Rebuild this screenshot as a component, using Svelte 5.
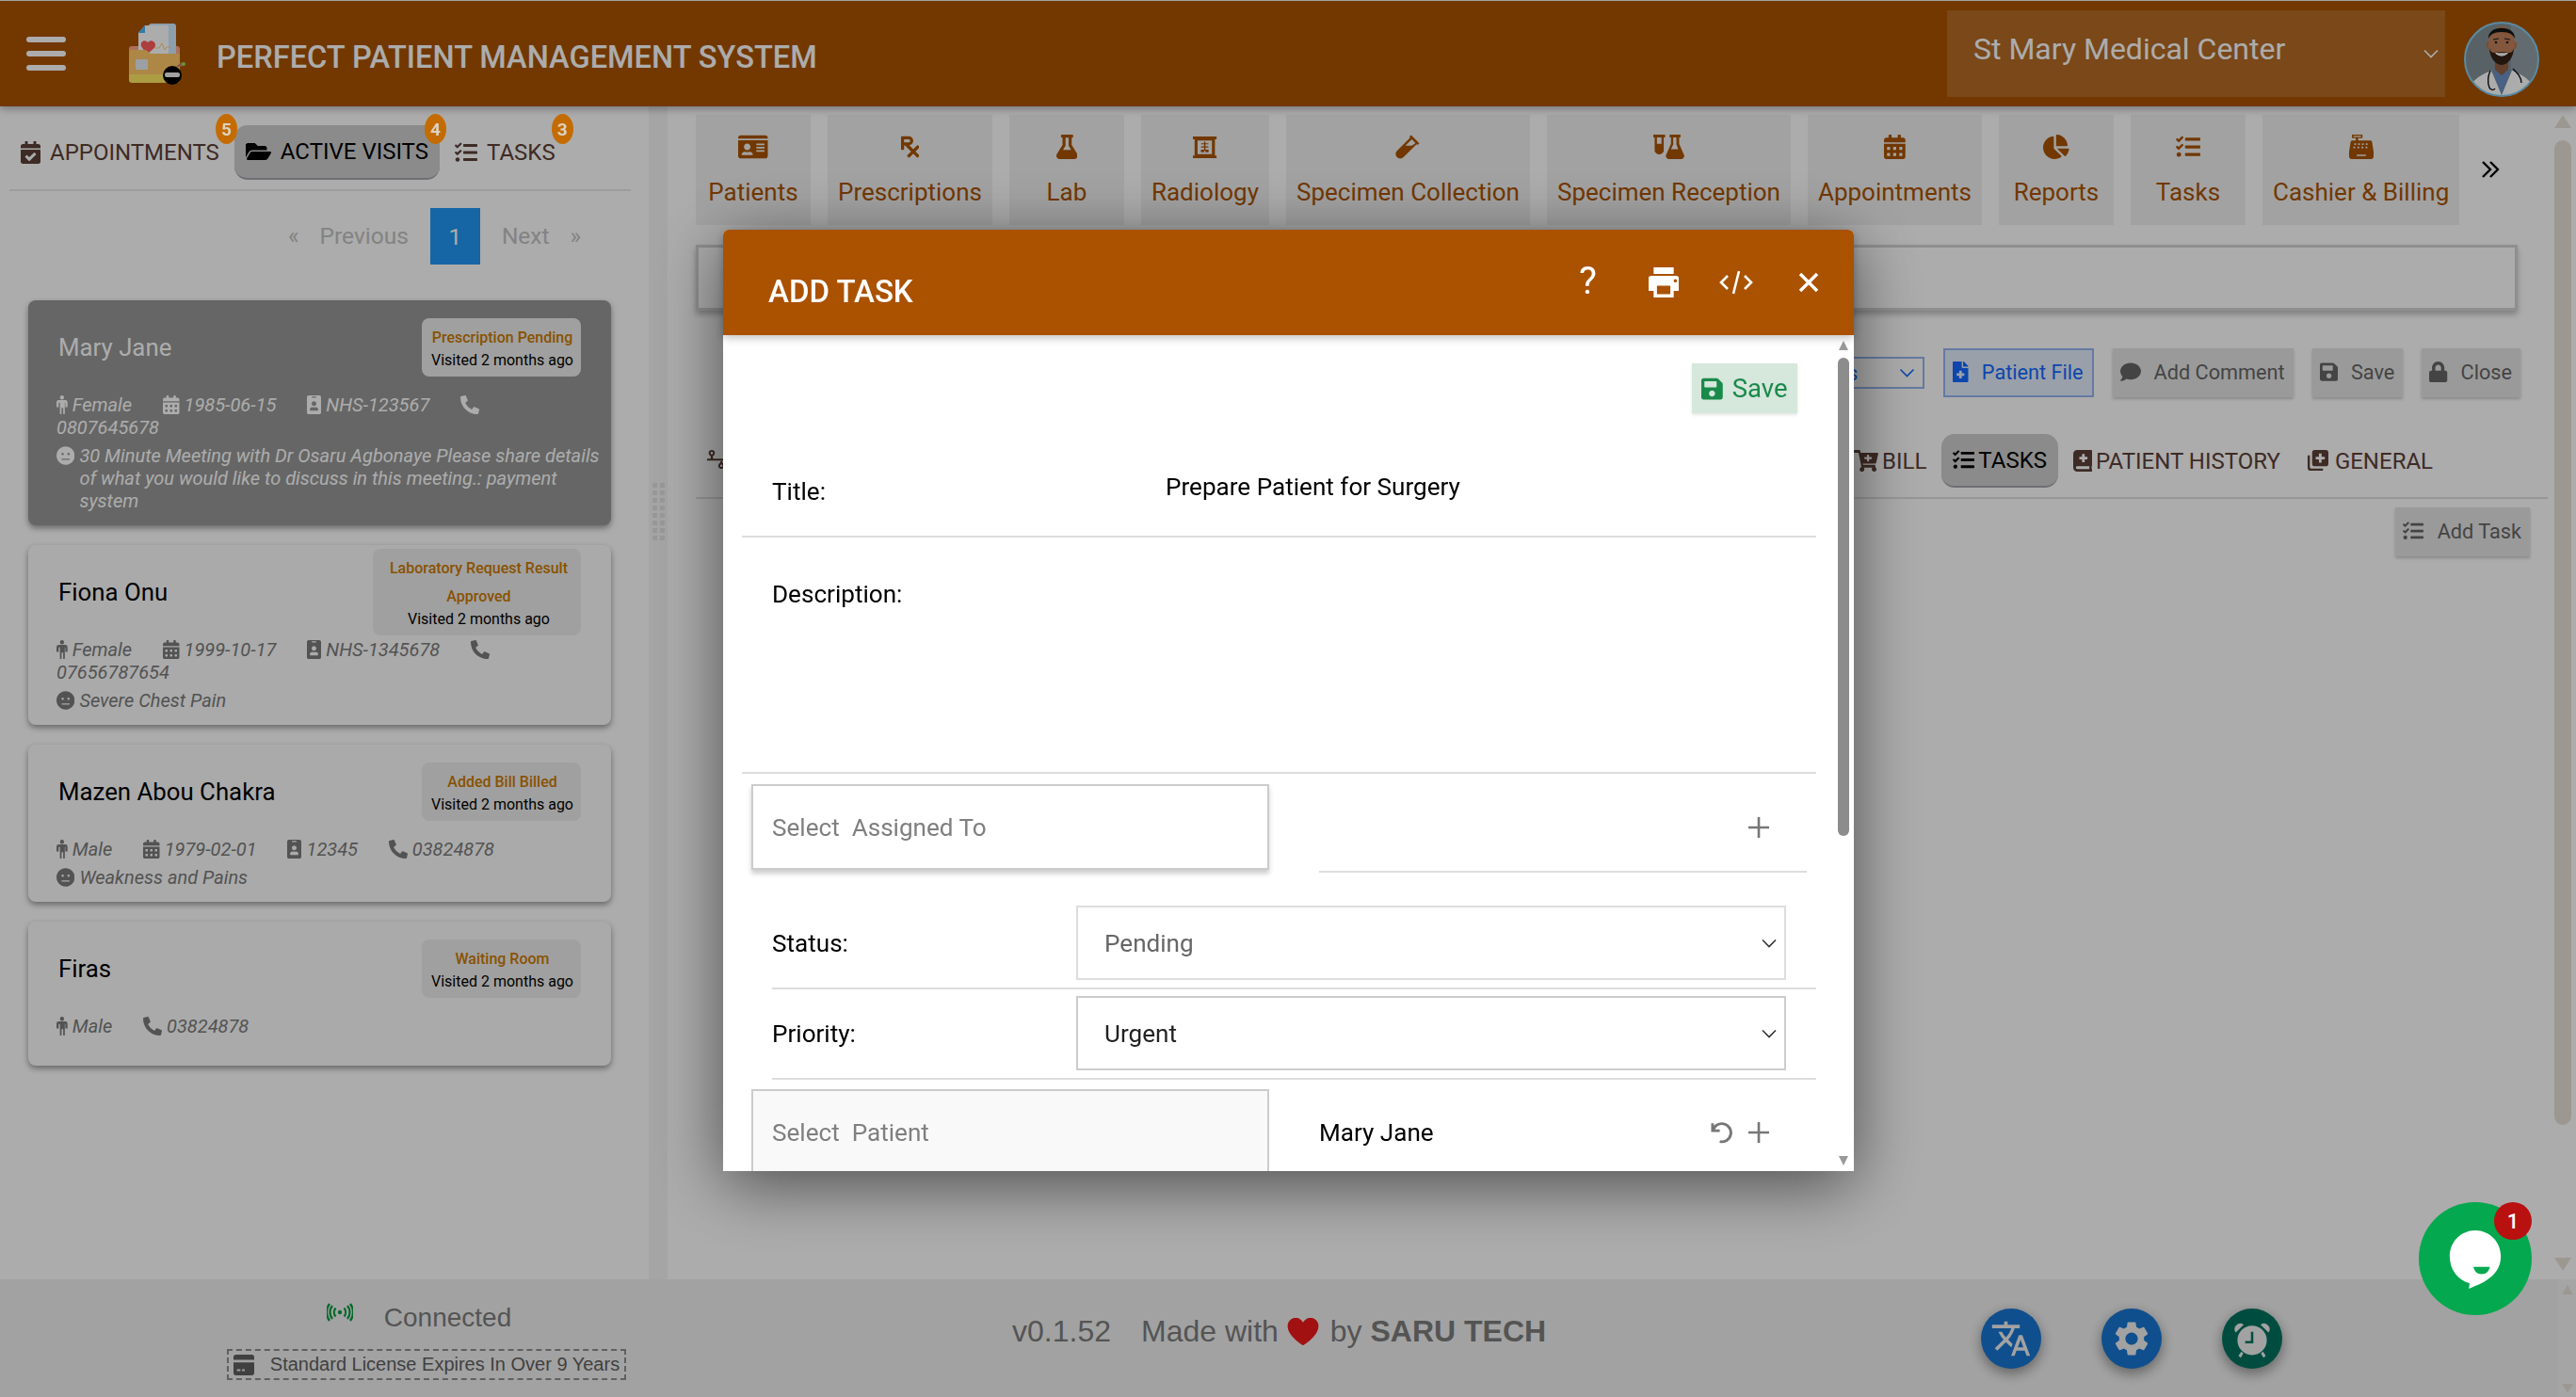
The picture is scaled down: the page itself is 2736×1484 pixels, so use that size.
<script>
    const icons = {
        calCheck: ['0 0 448 512', 'M436 160H12c-6.627 0-12-5.373-12-12v-36c0-26.51 21.49-48 48-48h48V12c0-6.627 5.373-12 12-12h40c6.627 0 12 5.373 12 12v52h128V12c0-6.627 5.373-12 12-12h40c6.627 0 12 5.373 12 12v52h48c26.51 0 48 21.49 48 48v36c0 6.627-5.373 12-12 12zM12 192h424c6.627 0 12 5.373 12 12v260c0 26.51-21.49 48-48 48H48c-26.51 0-48-21.49-48-48V204c0-6.627 5.373-12 12-12zm333.296 95.947l-28.169-28.398c-4.667-4.705-12.265-4.736-16.97-.068L194.12 364.665l-45.98-46.352c-4.667-4.705-12.265-4.736-16.97-.068l-28.397 28.17c-4.705 4.667-4.736 12.265-.068 16.97l82.601 83.269c4.667 4.705 12.265 4.736 16.97.068l142.953-141.805c4.705-4.667 4.736-12.265.067-16.97z'],
        folder: ['0 0 576 512', 'M572.694 292.093L500.27 416.248A63.997 63.997 0 0 1 444.989 448H45.025c-18.523 0-30.064-20.093-20.731-36.093l72.424-124.155A64 64 0 0 1 152 256h399.964c18.523 0 30.064 20.093 20.73 36.093zM152 224h328v-48c0-26.51-21.49-48-48-48H272l-64-64H48C21.49 64 0 85.49 0 112v278.046l69.077-118.418C86.214 242.25 117.989 224 152 224z'],
        tasks: ['0 0 512 512', 'M139.61 35.5a12 12 0 0 0-17 0L58.93 98.81l-22.7-22.12a12 12 0 0 0-17 0L3.53 92.41a12 12 0 0 0 0 17l47.59 47.4a12.78 12.78 0 0 0 17.61 0l15.59-15.62L156.52 69a12.09 12.09 0 0 0 .09-17zm0 159.19a12 12 0 0 0-17 0l-63.68 63.72-22.7-22.1a12 12 0 0 0-17 0L3.53 252a12 12 0 0 0 0 17L51 316.5a12.77 12.77 0 0 0 17.6 0l15.7-15.69 72.2-72.22a12 12 0 0 0 .09-16.9zM64 368c-26.49 0-48.59 21.5-48.59 48S37.53 464 64 464a48 48 0 0 0 0-96zm432 16H208a16 16 0 0 0-16 16v32a16 16 0 0 0 16 16h288a16 16 0 0 0 16-16v-32a16 16 0 0 0-16-16zm0-320H208a16 16 0 0 0-16 16v32a16 16 0 0 0 16 16h288a16 16 0 0 0 16-16V80a16 16 0 0 0-16-16zm0 160H208a16 16 0 0 0-16 16v32a16 16 0 0 0 16 16h288a16 16 0 0 0 16-16v-32a16 16 0 0 0-16-16z'],
        idCard: ['0 0 576 512', 'M528 32H48C21.5 32 0 53.5 0 80v16h576V80c0-26.5-21.5-48-48-48zM0 432c0 26.5 21.5 48 48 48h480c26.5 0 48-21.5 48-48V128H0v304zm352-232c0-4.4 3.6-8 8-8h144c4.4 0 8 3.6 8 8v16c0 4.4-3.6 8-8 8H360c-4.4 0-8-3.6-8-8v-16zm0 64c0-4.4 3.6-8 8-8h144c4.4 0 8 3.6 8 8v16c0 4.4-3.6 8-8 8H360c-4.4 0-8-3.6-8-8v-16zm0 64c0-4.4 3.6-8 8-8h144c4.4 0 8 3.6 8 8v16c0 4.4-3.6 8-8 8H360c-4.4 0-8-3.6-8-8v-16zM176 192c35.3 0 64 28.7 64 64s-28.7 64-64 64-64-28.7-64-64 28.7-64 64-64zM67.1 396.2C75.5 370.5 99.6 352 128 352h8.2c12.3 5.1 25.7 8 39.8 8s27.6-2.9 39.8-8h8.2c28.4 0 52.5 18.5 60.9 44.2 3.2 9.9-5.2 19.8-15.6 19.8H82.7c-10.4 0-18.8-10-15.6-19.8z'],
        rx: ['0 0 384 512', 'M301.26 352l78.06-78.06c6.25-6.25 6.25-16.38 0-22.63l-22.63-22.63c-6.25-6.25-16.38-6.25-22.63 0L256 306.74l-83.96-83.96C219.31 216.8 256 176.89 256 128c0-53.02-42.98-96-96-96H16C7.16 32 0 39.16 0 48v256c0 8.84 7.16 16 16 16h32c8.84 0 16-7.16 16-16v-80h18.75l128 128-78.06 78.06c-6.25 6.25-6.25 16.38 0 22.63l22.63 22.63c6.25 6.25 16.38 6.25 22.63 0L256 397.25l78.06 78.06c6.25 6.25 16.38 6.25 22.63 0l22.63-22.63c6.25-6.25 6.25-16.38 0-22.63L301.26 352zM64 96h96c17.64 0 32 14.36 32 32s-14.36 32-32 32H64V96z'],
        flask: ['0 0 448 512', 'M437.2 403.5L320 215V64h8c13.3 0 24-10.7 24-24V24c0-13.3-10.7-24-24-24H120c-13.3 0-24 10.7-24 24v16c0 13.3 10.7 24 24 24h8v151L10.8 403.5C-18.5 450.6 15.3 512 70.9 512h306.2c55.7 0 89.4-61.5 60.1-108.5zM137.9 320l48.2-77.6c3.7-5.2 5.8-11.6 5.8-18.4V64h64v160c0 6.9 2.2 13.2 5.8 18.4l48.2 77.6h-172z'],
        xray: ['0 0 560 512', 'M0 0h560v64H0zM0 448h560v64H0zM40 64h480v384H40zM110 96v320h340V96zM264 120h32v40h70v26h-70v50h70v26h-70v50h60c24 0 30 60-8 60h-52v-30h-32v30h-52c-38 0-32-60-8-60h60v-50h-70v-26h70v-50h-70v-26h70z'],
        vial: ['0 0 512 512', 'M330 10l172 172-40 36-18-18L170 474a96 96 0 0 1-136-136L310 64l-18-18zM344 98L210 232h136l76-56z'],
        vials: ['0 0 34 27', 'M0 0h13v3h-1.500v15.500a5.500 5.500 0 0 1-10 0V3H0zM4 3v7h5V3zM18 0h12v3h-1.500v7L33.500 21.500a3.500 3.500 0 0 1-3 5.500H17.500a3.500 3.500 0 0 1-3-5.500L19.500 10V3H18zM22 3v7.800L19.500 16h8L25.500 10.800V3z'],
        calAlt: ['0 0 448 512', 'M0 464c0 26.5 21.5 48 48 48h352c26.5 0 48-21.5 48-48V192H0v272zm320-196c0-6.6 5.4-12 12-12h40c6.6 0 12 5.4 12 12v40c0 6.6-5.4 12-12 12h-40c-6.6 0-12-5.4-12-12v-40zm0 128c0-6.6 5.4-12 12-12h40c6.6 0 12 5.4 12 12v40c0 6.6-5.4 12-12 12h-40c-6.6 0-12-5.4-12-12v-40zM192 268c0-6.6 5.4-12 12-12h40c6.6 0 12 5.4 12 12v40c0 6.6-5.4 12-12 12h-40c-6.6 0-12-5.4-12-12v-40zm0 128c0-6.6 5.4-12 12-12h40c6.6 0 12 5.4 12 12v40c0 6.6-5.4 12-12 12h-40c-6.6 0-12-5.4-12-12v-40zM64 268c0-6.6 5.4-12 12-12h40c6.6 0 12 5.4 12 12v40c0 6.6-5.4 12-12 12H76c-6.6 0-12-5.4-12-12v-40zm0 128c0-6.6 5.4-12 12-12h40c6.6 0 12 5.4 12 12v40c0 6.6-5.4 12-12 12H76c-6.6 0-12-5.4-12-12v-40zM400 64h-48V16c0-8.8-7.2-16-16-16h-32c-8.8 0-16 7.2-16 16v48H160V16c0-8.8-7.2-16-16-16h-32c-8.8 0-16 7.2-16 16v48H48C21.5 64 0 85.5 0 112v48h448v-48c0-26.5-21.5-48-48-48z'],
        pie: ['0 0 544 512', 'M527.79 288H290.5l158.03 158.03c6.04 6.04 15.98 6.53 22.19.68 38.7-36.46 65.32-85.61 73.13-140.86 1.34-9.46-6.51-17.85-16.06-17.85zm-15.83-64.8C503.72 103.74 408.26 8.28 288.8.04 279.68-.59 272 7.1 272 16.24V240h223.77c9.14 0 16.82-7.68 16.19-16.8zM224 288V50.71c0-9.55-8.39-17.4-17.84-16.06C86.99 51.49-4.1 155.6.14 280.37 4.5 408.51 114.83 513.59 243.03 511.98c50.4-.63 96.97-16.87 135.26-44.03 7.9-5.6 8.42-17.23 1.57-24.08L224 288z'],
        cash: ['0 0 512 512', 'M60 0h220v72H60zM90 24v24h160V24zM140 72h50v50h-50zM64 122h384a32 32 0 0 1 31 26l33 210v106a48 48 0 0 1-48 48H48a48 48 0 0 1-48-48V358l33-210a32 32 0 0 1 31-26zM110 180v36h36v-36zM190 180v36h36v-36zM270 180v36h36v-36zM350 180v36h36v-36zM90 250v36h36v-36zM175 250v36h36v-36zM260 250v36h36v-36zM345 250v36h36v-36zM160 420v30h190v-30z'],
        male: ['0 0 300 512', 'M150 0a56 56 0 1 1 0 112 56 56 0 0 1 0-112zM60 130h180a60 60 0 0 1 60 60v130h-60V200h-14v290a22 22 0 0 1-44 0V340h-44v150a22 22 0 0 1-44 0V200H60v120H0V190a60 60 0 0 1 60-60z'],
        badge: ['0 0 384 512', 'M336 0H48C21.5 0 0 21.5 0 48v416c0 26.5 21.5 48 48 48h288c26.5 0 48-21.5 48-48V48c0-26.5-21.5-48-48-48zM144 32h96c8.800 0 16 7.200 16 16s-7.200 16-16 16h-96c-8.800 0-16-7.200-16-16s7.200-16 16-16zm48 128c35.300 0 64 28.700 64 64s-28.700 64-64 64-64-28.700-64-64 28.700-64 64-64zm112 236.800c0 10.600-10 19.200-22.400 19.200H102.400C90 416 80 407.400 80 396.800v-19.200c0-31.800 30.100-57.600 67.200-57.600h5c12.300 5.100 25.700 8 39.800 8s27.600-2.900 39.800-8h5c37.100 0 67.200 25.800 67.200 57.600v19.200z'],
        phone: ['0 0 512 512', 'M497.39 361.8l-112-48a24 24 0 0 0-28 6.900l-49.600 60.600A370.660 370.660 0 0 1 130.600 204.110l60.600-49.600a23.940 23.940 0 0 0 6.900-28l-48-112A24.160 24.160 0 0 0 122.600.610l-104 24A24 24 0 0 0 0 48c0 256.500 207.900 464 464 464a24 24 0 0 0 23.400-18.600l24-104a24.290 24.290 0 0 0-14.010-27.600z'],
        meh: ['0 0 496 512', 'M248 8C111 8 0 119 0 256s111 248 248 248 248-111 248-248S385 8 248 8zM168 176a32 32 0 1 1 0 64 32 32 0 0 1 0-64zM328 176a32 32 0 1 1 0 64 32 32 0 0 1 0-64zM152 336h192c21.200 0 21.200 32 0 32H152c-21.200 0-21.200-32 0-32z'],
        save: ['0 0 448 512', 'M433.941 129.941l-83.882-83.882A48 48 0 0 0 316.118 32H48C21.490 32 0 53.490 0 80v352c0 26.510 21.490 48 48 48h352c26.510 0 48-21.490 48-48V163.882a48 48 0 0 0-14.059-33.941zM224 416c-35.346 0-64-28.654-64-64 0-35.346 28.654-64 64-64s64 28.654 64 64c0 35.346-28.654 64-64 64zm96-304.520V212c0 6.627-5.373 12-12 12H76c-6.627 0-12-5.373-12-12V108c0-6.627 5.373-12 12-12h228.520c3.183 0 6.235 1.264 8.485 3.515l3.480 3.480A11.996 11.996 0 0 1 320 111.480z'],
        lock: ['0 0 448 512', 'M400 224h-24v-72C376 68.200 307.800 0 224 0S72 68.200 72 152v72H48c-26.500 0-48 21.500-48 48v192c0 26.500 21.500 48 48 48h352c26.500 0 48-21.500 48-48V272c0-26.500-21.500-48-48-48zm-104 0H152v-72c0-39.700 32.300-72 72-72s72 32.300 72 72v72z'],
        comment: ['0 0 512 512', 'M256 32C114.600 32 0 125.100 0 240c0 49.600 21.400 95 57 130.700C44.500 421.100 2.700 466 2.200 466.500c-2.200 2.300-2.800 5.700-1.500 8.700S4.800 480 8 480c66.300 0 116-31.800 140.600-51.400 32.700 12.300 69 19.400 107.400 19.400 141.400 0 256-93.100 256-208S397.400 32 256 32z'],
        fileMed: ['0 0 384 512', 'M377 105L279.100 7c-4.500-4.500-10.600-7-17-7H256v128h128v-6.100c0-6.300-2.500-12.400-7-16.900zm-153 31V0H24C10.700 0 0 10.700 0 24v464c0 13.300 10.700 24 24 24h336c13.300 0 24-10.700 24-24V160H248c-13.200 0-24-10.800-24-24zm64 160v48c0 4.400-3.600 8-8 8h-56v56c0 4.400-3.600 8-8 8h-48c-4.400 0-8-3.600-8-8v-56h-56c-4.400 0-8-3.600-8-8v-48c0-4.400 3.600-8 8-8h56v-56c0-4.400 3.600-8 8-8h48c4.400 0 8 3.600 8 8v56h56c4.400 0 8 3.600 8 8z'],
        cart: ['0 0 576 512', 'M504.717 320H211.572l6.545 32h268.418c15.401 0 26.816 14.301 23.403 29.319l-5.517 24.276C523.112 414.668 536 433.828 536 456c0 31.202-25.519 56.573-56.836 55.999-29.835-.546-54.367-24.726-55.163-54.557-.434-16.331 6.148-31.136 16.837-41.442H231.200c10.985 10.622 17.800 25.391 17.800 41.800 0 31.977-26.100 57.700-58.200 57.200-28.466-.443-52.300-25.200-52.800-53.600-.466-26.500 17.500-50.800 42.700-56.700L110.600 64H24C10.745 64 0 53.255 0 40V24C0 10.745 10.745 0 24 0h102.529c11.401 0 21.228 8.021 23.513 19.190L159.208 64H551.990c15.401 0 26.816 14.301 23.403 29.319l-47.273 208C525.637 312.246 515.923 320 504.717 320zM408 168h-48v-40c0-8.837-7.163-16-16-16h-16c-8.837 0-16 7.163-16 16v40h-48c-8.837 0-16 7.163-16 16v16c0 8.837 7.163 16 16 16h48v40c0 8.837 7.163 16 16 16h16c8.837 0 16-7.163 16-16v-40h48c8.837 0 16-7.163 16-16v-16c0-8.837-7.163-16-16-16z'],
        book: ['0 0 448 512', 'M448 358.400V25.600c0-16-9.600-25.600-25.600-25.600H96C41.600 0 0 41.600 0 96v320c0 54.400 41.600 96 96 96h326.400c12.800 0 25.600-9.600 25.600-25.600v-16q0-9.600-9.600-19.200c-3.200-16-3.200-60.800 0-73.600q9.600-4.800 9.600-19.200zM144 168a8 8 0 0 1 8-8h56v-56a8 8 0 0 1 8-8h48a8 8 0 0 1 8 8v56h56a8 8 0 0 1 8 8v48a8 8 0 0 1-8 8h-56v56a8 8 0 0 1-8 8h-48a8 8 0 0 1-8-8v-56h-56a8 8 0 0 1-8-8zm236.800 280H96c-19.200 0-32-12.800-32-32s16-32 32-32h284.800z'],
        general: ['0 0 24 24', 'M9 0h12a3 3 0 0 1 3 3v12a3 3 0 0 1-3 3H9a3 3 0 0 1-3-3V3a3 3 0 0 1 3-3zM13.500 4v3.500H10v3h3.500V14h3v-3.500H20v-3h-3.500V4zM1 6h2.500v13A1.500 1.500 0 0 0 5 20.500h13V23H4.500A3.500 3.500 0 0 1 1 19.500z'],
        sitemap: ['0 0 24 24', 'M6 0a4 4 0 0 1 1.400 7.750V11H24v2.500H0V11h4.600V7.750A4 4 0 0 1 6 0zM6 2.400a1.600 1.600 0 1 0 0 3.200 1.600 1.600 0 0 0 0-3.200zM17 14h2.500v2.300A4 4 0 1 1 17 16.300zM18.200 18.500a1.600 1.600 0 1 0 0 3.200 1.600 1.600 0 0 0 0-3.200z'],
        licence: ['0 0 24 24', 'M3 0h18a3 3 0 0 1 3 3v3H0V3a3 3 0 0 1 3-3zM0 9h24v12a3 3 0 0 1-3 3H3a3 3 0 0 1-3-3zM4 17v2h4v-2zM10 17v2h3v-2z'],
        translate: ['0 0 24 24', 'M12.870 15.070l-2.540-2.510.03-.03c1.740-1.940 2.980-4.170 3.710-6.530H17V4h-7V2H8v2H1v1.990h11.170C11.500 7.920 10.440 9.750 9 11.350 8.070 10.320 7.300 9.190 6.690 8h-2c.73 1.630 1.730 3.170 2.980 4.560l-5.090 5.020L4 19l5-5 3.110 3.110.76-2.040zM18.500 10h-2L12 22h2l1.120-3h4.750L21 22h2l-4.500-12zm-2.620 7l1.620-4.330L19.120 17h-3.240z'],
        gear: ['0 0 24 24', 'M19.140 12.940c.04-.3.06-.61.06-.94 0-.32-.02-.64-.07-.94l2.030-1.580a.49.49 0 0 0 .12-.61l-1.920-3.320a.488.488 0 0 0-.59-.22l-2.390.96c-.5-.38-1.030-.7-1.620-.94l-.36-2.540a.484.484 0 0 0-.48-.41h-3.840c-.24 0-.43.17-.47.41l-.36 2.540c-.59.24-1.130.57-1.620.94l-2.390-.96c-.22-.08-.47 0-.59.22L2.740 8.870c-.12.21-.08.47.12.61l2.030 1.580c-.05.3-.09.63-.09.94s.02.64.07.94l-2.030 1.580a.49.49 0 0 0-.12.61l1.920 3.320c.12.22.37.29.59.22l2.390-.96c.5.38 1.030.7 1.620.94l.36 2.540c.05.24.24.41.48.41h3.840c.24 0 .44-.17.47-.41l.36-2.540c.59-.24 1.130-.56 1.620-.94l2.390.96c.22.08.47 0 .59-.22l1.920-3.320c.12-.22.07-.47-.12-.61l-2.010-1.580zM12 15.600c-1.980 0-3.600-1.620-3.600-3.600s1.620-3.600 3.600-3.600 3.600 1.620 3.600 3.600-1.620 3.600-3.600 3.600z'],
        alarm: ['0 0 24 24', 'M12 4.500a8.500 8.500 0 1 1 0 17 8.500 8.500 0 0 1 0-17zM11.300 8v5.300H8v1.400h4.700V8zM2.500 8.500a3.300 3.300 0 0 1 4.600-4.600zM21.500 8.500a3.300 3.300 0 0 0-4.600-4.600zM5.700 19.500l1.200 1.100L5.400 23l-1.300-1zM18.300 19.500l-1.200 1.100 1.500 2.400 1.300-1z'],
    };

    const leftTabs = [
        { icon: 'calCheck', label: 'APPOINTMENTS', count: 5 },
        { icon: 'folder', label: 'ACTIVE VISITS', count: 4, active: true },
        { icon: 'tasks', label: 'TASKS', count: 3 },
    ];

    const tiles = [
        { icon: 'idCard', label: 'Patients', cls: 'tall' },
        { icon: 'rx', label: 'Prescriptions' },
        { icon: 'flask', label: 'Lab' },
        { icon: 'xray', label: 'Radiology', cls: 'short' },
        { icon: 'vial', label: 'Specimen Collection' },
        { icon: 'vials', label: 'Specimen Reception' },
        { icon: 'calAlt', label: 'Appointments' },
        { icon: 'pie', label: 'Reports' },
        { icon: 'tasks', label: 'Tasks' },
        { icon: 'cash', label: 'Cashier & Billing' },
    ];

    const visits = [
        { name: 'Mary Jane', status: ['Prescription Pending'], gender: 'Female', dob: '1985-06-15', id: 'NHS-123567', phone: '0807645678', reason: '30 Minute Meeting with Dr Osaru Agbonaye Please share details of what you would like to discuss in this meeting.: payment system', selected: true },
        { name: 'Fiona Onu', status: ['Laboratory Request Result', 'Approved'], gender: 'Female', dob: '1999-10-17', id: 'NHS-1345678', phone: '07656787654', reason: 'Severe Chest Pain' },
        { name: 'Mazen Abou Chakra', status: ['Added Bill Billed'], gender: 'Male', dob: '1979-02-01', id: '12345', phone: '03824878', reason: 'Weakness and Pains' },
        { name: 'Firas', status: ['Waiting Room'], gender: 'Male', phone: '03824878' },
    ];

    const subTabs = [
        { icon: 'cart', label: 'BILL' },
        { icon: 'tasks', label: 'TASKS', active: true },
        { icon: 'book', label: 'PATIENT HISTORY' },
        { icon: 'general', label: 'GENERAL', wide: true },
    ];
</script>

{#snippet icon(name, cls = '')}
    <svg class="ic {cls}" viewBox={icons[name][0]} aria-hidden="true"><path fill-rule="evenodd" d={icons[name][1]} /></svg>
{/snippet}

{#snippet chevron(cls = '')}
    <svg class="chev {cls}" viewBox="0 0 16 10" aria-hidden="true"><path d="M1 1.500l7 7 7-7" /></svg>
{/snippet}

{#snippet plus()}
    <svg class="plus" viewBox="0 0 24 24" aria-hidden="true"><path d="M12 1v22M1 12h22" /></svg>
{/snippet}

<div class="page">
    <header class="topbar">
        <button class="burger" aria-label="menu"><span></span><span></span><span></span></button>
        <svg class="logo" viewBox="0 0 62 66" aria-hidden="true">
            <rect x="0" y="24" width="54" height="38" rx="3" fill="#d9745f" />
            <path d="M18 4l5-4h24a3 3 0 0 1 3 3v42H11V11z" fill="#8ea3c9" />
            <path d="M10 10l7-8h22a3 3 0 0 1 3 3v42H10z" fill="#b9bdcc" />
            <path d="M10 10l7-8v8z" fill="#2f7fb5" />
            <path d="M20 20c-3-4-9-1-7 4 1 3 4 5 7 8 3-3 7-5 8-8 1-5-5-8-8-4z" fill="#b4403f" />
            <path d="M27 26h5l3-5 3 7 2-3h4" fill="none" stroke="#b6884a" stroke-width="1" />
            <path d="M22 37h2v2h-2zM26 37h12v2H26zM22 41h2v2h-2zM26 41h12v2H26z" fill="#4a5270" />
            <path d="M0 30a2 2 0 0 1 2-2h16l5 4h29a2 2 0 0 1 2 2v20H0z" fill="#c98a48" />
            <path d="M0 54h54v6a3 3 0 0 1-3 3H3a3 3 0 0 1-3-3z" fill="#c9a145" />
            <rect x="7" y="38" width="13" height="11" rx="1" fill="#9fa4a8" />
            <circle cx="46" cy="55" r="10" fill="#000" />
            <rect x="38" y="52" width="16" height="5" rx="2" fill="#a5a5a5" />
            <path d="M50 46l5-5 3 3-3 2" fill="#8a5a4a" /><circle cx="58" cy="43" r="2" fill="#6a9a3a" />
        </svg>
        <h1>PERFECT PATIENT MANAGEMENT SYSTEM</h1>
        <div class="facility">
            <span>St Mary Medical Center</span>
            {@render chevron()}
        </div>
        <svg class="avatar" viewBox="0 0 80 80" aria-hidden="true">
            <defs><clipPath id="avatar-clip"><circle cx="40" cy="40" r="39" /></clipPath></defs>
            <g clip-path="url(#avatar-clip)">
                <rect width="80" height="80" fill="#5a6569" />
                <rect x="50" width="30" height="80" fill="#656f73" />
                <path d="M2 80c2-14 12-22 27-28l11 26 11-26c15 6 25 14 27 28z" fill="#b5b7b8" />
                <path d="M30 50l10 28 10-28-10 6z" fill="#4a6488" />
                <path d="M33 36h14v15l-7 6-7-6z" fill="#66432f" />
                <ellipse cx="26" cy="25" rx="2" ry="4" fill="#7a5038" />
                <ellipse cx="54" cy="25" rx="2" ry="4" fill="#7a5038" />
                <ellipse cx="40" cy="24" rx="14" ry="19" fill="#86593f" />
                <path d="M26 18C25 3 55 3 54 18c-2-4-5-7-14-7s-12 3-14 7z" fill="#0e0e0e" />
                <path d="M27 28c0 9 6 18 13 18s13-9 13-18c-1 4-3 5-5 5-3-1-13-1-16 0-2 0-4-1-5-5z" fill="#24170f" />
                <path d="M33 33c3 4.500 11 4.500 14 0-4 .8-10 .8-14 0z" fill="#f2f2f2" />
                <circle cx="34" cy="22" r="1.300" fill="#111" /><circle cx="46" cy="22" r="1.300" fill="#111" />
                <path d="M31 19l6-1M43 18l6 1" stroke="#111" stroke-width="1.200" fill="none" />
                <path d="M28 52c-3 7-3 13-1 18 1 3 5 3 6 1M52 50c5 5 9 9 9 15" stroke="#101010" stroke-width="1.500" fill="none" />
            </g>
            <circle cx="40" cy="40" r="39" fill="none" stroke="#5b8ea8" stroke-width="2" />
        </svg>
    </header>

    <div class="body">
        <aside class="sidebar">
            <nav class="left-tabs">
                {#each leftTabs as tab}
                    <div class="left-tab" class:active={tab.active}>
                        {@render icon(tab.icon)}
                        <span>{tab.label}</span>
                        <b class="count">{tab.count}</b>
                    </div>
                {/each}
            </nav>
            <div class="pager">
                <span class="arrow">«</span>
                <span>Previous</span>
                <span class="page-no">1</span>
                <span>Next</span>
                <span class="arrow">»</span>
            </div>
            <div class="cards">
                {#each visits as v}
                    <article class="card" class:selected={v.selected}>
                        <div class="card-top">
                            <div class="name">{v.name}</div>
                            <div class="status" class:long={v.status.length > 1}>
                                {#each v.status as s}
                                    <div class="status-text">{s}</div>
                                {/each}
                                <div class="visited">Visited 2 months ago</div>
                            </div>
                        </div>
                        <div class="details">
                            <span class="item">{@render icon('male')}{v.gender}</span>
                            {#if v.dob}<span class="item">{@render icon('calAlt')}{v.dob}</span>{/if}
                            {#if v.id}<span class="item">{@render icon('badge')}{v.id}</span>{/if}
                            <span class="item phone">{@render icon('phone')} {v.phone}</span>
                        </div>
                        <div class="reason" class:none={!v.reason}>
                            {#if v.reason}
                                {@render icon('meh')}
                                <span>{v.reason}</span>
                            {/if}
                        </div>
                    </article>
                {/each}
            </div>
        </aside>

        <div class="splitter"><i></i><i></i><i></i><i></i><i></i><i></i><i></i><i></i><i></i><i></i><i></i><i></i><i></i><i></i><i></i><i></i></div>

        <main class="main">
            <div class="tiles">
                {#each tiles as t}
                    <div class="tile">
                        {@render icon(t.icon, t.cls)}
                        <span>{t.label}</span>
                    </div>
                {/each}
                <svg class="more" viewBox="0 0 20 18" aria-hidden="true"><path d="M2 1l8 8-8 8M10 1l8 8-8 8" /></svg>
            </div>
            <div class="patient-box"></div>
            <div class="toolbar">
                <div class="tool-select"><span>Forms</span>{@render chevron('blue')}</div>
                <div class="tool file">{@render icon('fileMed')}<span>Patient File</span></div>
                <div class="tool">{@render icon('comment')}<span>Add Comment</span></div>
                <div class="tool">{@render icon('save')}<span>Save</span></div>
                <div class="tool">{@render icon('lock')}<span>Close</span></div>
            </div>
            <div class="sub-tabs">
                {@render icon('sitemap', 'far-left')}
                <div class="sub-group">
                    {#each subTabs as t}
                        <div class="sub-tab" class:active={t.active} class:wide={t.wide}>{@render icon(t.icon)}<span>{t.label}</span></div>
                    {/each}
                </div>
            </div>
            <div class="add-row">
                <div class="tool">{@render icon('tasks')}<span>Add Task</span></div>
            </div>
        </main>

        <div class="page-scroll">
            <i class="up"></i>
            <div class="thumb"></div>
            <i class="down"></i>
        </div>
    </div>

    <footer class="footer">
        <div class="foot-left">
            <div class="connected">
                <svg class="signal" viewBox="0 0 28 20" aria-hidden="true">
                    <circle cx="14" cy="10" r="2.200" class="dot" />
                    <path d="M9.500 5.500a7 7 0 0 0 0 9M18.500 5.500a7 7 0 0 1 0 9M6 3a11 11 0 0 0 0 14M22 3a11 11 0 0 1 0 14M3 1a15 15 0 0 0 0 18M25 1a15 15 0 0 1 0 18" />
                </svg>
                <span>Connected</span>
            </div>
            <div class="licence">{@render icon('licence')}<span>Standard License Expires In Over 9 Years</span></div>
        </div>
        <div class="foot-mid">
            <span class="ver">v0.1.52</span>
            <span>Made with</span>
            <svg class="heart" viewBox="0 0 24 22" aria-hidden="true"><path d="M12 21.500S0 14.500 0 6.500A6.300 6.300 0 0 1 12 3.500a6.300 6.300 0 0 1 12 3c0 8-12 15-12 15z" /></svg>
            <span>by <b>SARU TECH</b></span>
        </div>
        <div class="foot-btns">
            <button class="fab" aria-label="language">{@render icon('translate')}</button>
            <button class="fab" aria-label="settings">{@render icon('gear')}</button>
            <button class="fab teal" aria-label="alarm">{@render icon('alarm')}</button>
        </div>
        <div class="foot-scroll"><i class="up"></i><i class="down"></i></div>
    </footer>
</div>

<div class="backdrop"></div>

<section class="modal">
    <div class="modal-head">
        <h2>ADD TASK</h2>
        <div class="modal-actions">
            <span class="help">?</span>
            <svg class="m-print" viewBox="3 3 18 18" aria-hidden="true"><path d="M19 8H5c-1.660 0-3 1.340-3 3v6h4v4h12v-4h4v-6c0-1.660-1.340-3-3-3zm-3 11H8v-5h8v5zm3-7c-.55 0-1-.45-1-1s.45-1 1-1 1 .45 1 1-.45 1-1 1zm-1-9H6v4h12V3z" /></svg>
            <svg class="m-code" viewBox="0 0 36 26" aria-hidden="true"><path d="M9 6l-7 7 7 7M27 6l7 7-7 7M21 1l-6 24" /></svg>
            <svg class="m-close" viewBox="0 0 22 22" aria-hidden="true"><path d="M2 2l18 18M20 2L2 20" /></svg>
        </div>
    </div>
    <div class="modal-body">
        <div class="form">
            <div class="save-row">
                <div class="save-btn">{@render icon('save')}<span>Save</span></div>
            </div>
            <div class="row title-row">
                <span class="lbl">Title:</span>
                <span class="title-val">Prepare Patient for Surgery</span>
            </div>
            <div class="row desc-row"><span class="lbl">Description:</span></div>
            <div class="pick-row first">
                <div class="pick">Select  Assigned To</div>
                <div class="picked underline"><span></span><span class="pick-icons">{@render plus()}</span></div>
            </div>
            <div class="row field first-field">
                <span class="lbl">Status:</span>
                <div class="sel">Pending{@render chevron('sel-chev')}</div>
            </div>
            <div class="row field">
                <span class="lbl">Priority:</span>
                <div class="sel dark">Urgent{@render chevron('sel-chev')}</div>
            </div>
            <div class="pick-row">
                <div class="pick filled">Select  Patient</div>
                <div class="picked">
                    <span>Mary Jane</span>
                    <span class="pick-icons">
                        <svg class="undo" viewBox="0 0 28 24" aria-hidden="true"><path d="M3 2v8h8M3.500 10A10 10 0 1 1 11 22" /></svg>
                        {@render plus()}
                    </span>
                </div>
            </div>
        </div>
        <div class="modal-scroll">
            <i class="up"></i>
            <div class="thumb"></div>
            <div class="fill"></div>
            <i class="down"></i>
        </div>
    </div>
</section>

<div class="chat">
    <svg viewBox="0 0 56 64" aria-hidden="true">
        <path d="M28 0c15.500 0 28 12.500 28 28 0 15-9 25-28 33l-7 3 .8-6C8 54 0 42.500 0 28 0 12.500 12.500 0 28 0z" fill="#fff" />
        <path d="M26 40h18c-1 5-4 8-9 8s-8-3-9-8z" fill="#04a84e" />
    </svg>
    <b>1</b>
</div>

<style>
    :global(body) {
        margin: 0;
        background: #fff;
        overflow: hidden;
    }
    .page {
        width: 2736px;
        height: 1484px;
        display: flex;
        flex-direction: column;
        font-family: Roboto, "Liberation Sans", sans-serif;
        font-size: 24px;
        color: #000;
        overflow: hidden;
    }
    .ic {
        height: 1em;
        width: auto;
        fill: currentColor;
        flex: none;
    }
    .chev {
        width: 16px;
        height: 10px;
        fill: none;
        stroke: currentColor;
        stroke-width: 1.6;
    }
    .plus {
        width: 24px;
        height: 24px;
        fill: none;
        stroke: #777;
        stroke-width: 2.6;
    }

    /* top bar */
    .topbar {
        margin-top: 1px;
        height: 112px;
        flex: none;
        background: #aa5300;
        color: #fff;
        display: flex;
        align-items: center;
        box-shadow: 0 3px 8px rgba(0, 0, 0, .3);
        position: relative;
        z-index: 2;
    }
    .burger {
        width: 42px;
        height: 36px;
        margin-left: 28px;
        padding: 0;
        background: none;
        border: 0;
        display: flex;
        flex-direction: column;
        justify-content: space-between;
    }
    .burger span {
        height: 6px;
        border-radius: 3px;
        background: #fff;
    }
    .logo {
        width: 62px;
        height: 66px;
        margin-left: 67px;
        margin-top: 1px;
        filter: brightness(1.45);
    }
    h1 {
        margin: 0 0 0 31px;
        font-size: 32.6px;
        font-weight: 500;
        line-height: 1;
        position: relative;
        top: 4px;
    }
    .facility {
        margin-left: auto;
        width: 529px;
        height: 92px;
        box-sizing: border-box;
        padding: 0 7px 0 28px;
        background: rgba(255, 255, 255, .15);
        display: flex;
        align-items: center;
        justify-content: space-between;
        font-size: 32px;
    }
    .facility span {
        position: relative;
        top: -5px;
    }
    .avatar {
        width: 80px;
        height: 80px;
        margin: 0 39px 0 20px;
        position: relative;
        top: 6px;
        filter: brightness(1.45);
    }

    /* layout */
    .body {
        flex: 1;
        display: flex;
        min-height: 0;
        background: #fff;
    }
    .sidebar {
        width: 689px;
        flex: none;
        box-sizing: border-box;
    }
    .splitter {
        width: 20px;
        flex: none;
        background: #f5f5f5;
        box-sizing: border-box;
        padding: 400px 5px 0;
        display: grid;
        grid-template-columns: 5px 5px;
        grid-auto-rows: 5px;
        gap: 3px;
        justify-content: center;
    }
    .splitter i {
        background: #e2e2e2;
    }
    .main {
        flex: 1;
        min-width: 0;
        padding-left: 30px;
    }
    .page-scroll {
        width: 23px;
        flex: none;
        display: flex;
        flex-direction: column;
        padding: 9px 5px 9px 0;
        box-sizing: border-box;
        align-items: center;
    }
    .page-scroll .thumb {
        width: 18px;
        height: 1046px;
        margin-top: 13px;
        border-radius: 9px;
        background: #e8e2d8;
    }
    .page-scroll .down {
        margin-top: auto;
    }
    .up, .down {
        display: block;
        width: 0;
        height: 0;
        border-left: 9px solid transparent;
        border-right: 9px solid transparent;
        flex: none;
    }
    .up {
        border-bottom: 14px solid #e8e2d8;
    }
    .down {
        border-top: 14px solid #e8e2d8;
    }

    /* left panel */
    .left-tabs {
        height: 90px;
        margin: 0 19px 0 10px;
        box-sizing: border-box;
        padding: 20px 0 0 12px;
        border-bottom: 2px solid #e8e8e8;
        display: flex;
        align-items: flex-start;
    }
    .left-tab {
        position: relative;
        display: flex;
        align-items: center;
        gap: 10px;
        height: 58px;
        color: #5d4037;
        white-space: nowrap;
        padding-right: 16px;
    }
    .left-tab:last-child {
        padding-left: 16px;
    }
    .left-tab.active {
        background: #cfcfcf;
        color: #000;
        border-radius: 14px;
        border-bottom: 2px solid #a4a4ac;
        box-sizing: border-box;
        padding: 0 12px;
        gap: 10px;
    }
    .count {
        position: absolute;
        top: -12px;
        right: -3px;
        width: 23px;
        height: 32px;
        border-radius: 50%;
        background: #c46c00;
        color: #ddd2c2;
        font-size: 19px;
        font-weight: 700;
        display: flex;
        align-items: center;
        justify-content: center;
        z-index: 11;
    }
    .active .count {
        right: -7px;
    }
    .pager {
        margin-top: 18px;
        height: 60px;
        display: flex;
        align-items: center;
        justify-content: flex-end;
        padding-right: 50px;
        color: #c2c2c2;
        font-size: 24.5px;
    }
    .pager span {
        margin-bottom: 2px;
    }
    .pager .arrow {
        margin: 0 22px 2px;
    }
    .pager .arrow:first-child {
        margin: 0 22px 2px 0;
    }
    .pager .page-no {
        width: 53px;
        height: 60px;
        margin: 0 23px;
        background: #2196f3;
        color: #fff;
        display: flex;
        align-items: center;
        justify-content: center;
    }
    .cards {
        padding: 38px 40px 0 30px;
        display: flex;
        flex-direction: column;
        gap: 21px;
    }
    .card {
        background: #fdfdfd;
        border-radius: 8px;
        padding: 0 4px 14px 30px;
        box-shadow: 0 3px 6px rgba(0, 0, 0, .4);
        color: #7b7b7b;
    }
    .card.selected {
        background: #979797;
        color: #fff;
    }
    .card-top {
        height: 99px;
        display: flex;
        align-items: center;
        justify-content: space-between;
        padding-right: 28px;
    }
    .name {
        font-size: 25.8px;
        color: #000;
        padding-left: 2px;
    }
    .selected .name {
        color: #fff;
    }
    .status {
        background: #eee;
        border-radius: 8px;
        padding: 9px 8px 6px 10px;
        text-align: center;
        font-size: 16px;
    }
    .status.long {
        padding: 9px 14px 6px 18px;
    }
    .status-text {
        color: #cc7a00;
        font-weight: 500;
        line-height: 24px;
    }
    .status-text + .status-text {
        margin-top: 6px;
    }
    .visited {
        color: #000;
        line-height: 23px;
    }
    .details {
        font-size: 20px;
        font-style: italic;
        line-height: 24px;
        padding-right: 30px;
    }
    .item {
        white-space: nowrap;
        margin-right: 28px;
    }
    .item.phone {
        white-space: normal;
        margin-right: 0;
    }
    .item .ic {
        height: 20px;
        vertical-align: -3px;
        margin-right: 5px;
    }
    .item.phone .ic {
        margin-right: 0;
    }
    .reason {
        display: flex;
        gap: 5px;
        min-height: 24px;
        margin-top: 6px;
        font-size: 20px;
        font-style: italic;
        line-height: 24px;
    }
    .reason.none {
        min-height: 0;
        margin-top: 16px;
    }
    .reason .ic {
        height: 20px;
        margin-top: 2px;
    }

    /* main panel */
    .tiles {
        margin-top: 9px;
        display: flex;
        gap: 18px;
        align-items: center;
    }
    .tile {
        height: 117px;
        min-width: 122px;
        box-sizing: border-box;
        padding: 21px 11px 0;
        background: #f1f1f1;
        color: #aa5300;
        display: flex;
        flex-direction: column;
        align-items: center;
        white-space: nowrap;
        font-size: 26px;
    }
    .tile .ic {
        height: 26px;
    }
    .tile .ic.short {
        height: 23px;
        margin: 2px 0 1px;
    }
    .tile .ic.tall {
        height: 28px;
        margin: -1px 0;
    }
    .tile span {
        margin-top: 20px;
    }
    .more {
        width: 20px;
        height: 18px;
        margin: 0 0 0 5px;
        fill: none;
        stroke: #000;
        stroke-width: 2.400;
        position: relative;
        top: -1px;
    }
    .patient-box {
        height: 70px;
        margin: 21px 39px 0 0;
        box-sizing: border-box;
        border: 3px solid #d4d4d4;
        box-shadow: 0 4px 6px rgba(0, 0, 0, .25);
    }
    .toolbar {
        margin-top: 40px;
        padding-right: 36px;
        display: flex;
        justify-content: flex-end;
        align-items: center;
        gap: 20px;
    }
    .tool {
        height: 52px;
        box-sizing: border-box;
        padding: 0 9px 2px 8px;
        background: #e4e4e4;
        color: #666;
        display: flex;
        align-items: center;
        gap: 14px;
        font-size: 21.7px;
        box-shadow: 0 2px 3px rgba(0, 0, 0, .2);
    }
    .tool .ic {
        height: 22px;
    }
    .tool.file {
        background: #e3eefc;
        border: 2px solid #96b6f2;
        color: #1469ff;
        box-shadow: none;
    }
    .tool-select {
        width: 344px;
        height: 34px;
        box-sizing: border-box;
        border: 2px solid #96b6f2;
        color: #1469ff;
        display: flex;
        align-items: center;
        justify-content: flex-end;
        gap: 44px;
        padding-right: 8px;
        font-size: 22px;
    }
    .chev.blue {
        width: 17px;
        height: 10px;
    }
    .sub-tabs {
        margin-top: 39px;
        height: 69px;
        margin-right: 7px;
        box-sizing: border-box;
        border-bottom: 2px solid #e0e0e0;
        display: flex;
        justify-content: space-between;
        color: #5d4037;
        padding-right: 110px;
    }
    .far-left {
        height: 20px;
        margin: 17px 0 0 12px;
    }
    .sub-group {
        display: flex;
        gap: 4px;
        align-items: flex-start;
    }
    .sub-tab {
        height: 57px;
        box-sizing: border-box;
        display: flex;
        align-items: center;
        gap: 4px;
        padding: 0 12px;
        white-space: nowrap;
    }
    .sub-tab.wide {
        gap: 7px;
    }
    .sub-tab .ic {
        height: 23px;
    }
    .sub-tab.active {
        background: #cfcfcf;
        color: #000;
        border-radius: 14px;
        border-bottom: 2px solid #a4a4ac;
    }
    .add-row {
        margin-top: 9px;
        display: flex;
        justify-content: flex-end;
        padding-right: 26px;
    }
    .add-row .tool {
        gap: 15px;
    }

    /* footer */
    .footer {
        height: 125px;
        flex: none;
        background: #f1f1f1;
        display: flex;
        font-family: "Liberation Sans", Arial, sans-serif;
        color: #7d7d7d;
        position: relative;
    }
    .foot-left {
        width: 906px;
        flex: none;
        display: flex;
        flex-direction: column;
        align-items: center;
    }
    .connected {
        margin-top: 25px;
        display: flex;
        gap: 33px;
        font-size: 28px;
        line-height: 32px;
        position: relative;
        left: -8px;
    }
    .signal {
        width: 28px;
        height: 20px;
        fill: none;
        stroke: #0a9a40;
        stroke-width: 2.200;
    }
    .signal .dot {
        fill: #0a9a40;
        stroke: none;
    }
    .licence {
        margin-top: 17px;
        height: 33px;
        box-sizing: border-box;
        border: 2px dashed #8f8f8f;
        padding: 0 5px;
        display: flex;
        align-items: center;
        gap: 17px;
        font-size: 20px;
        color: #606060;
        white-space: nowrap;
    }
    .licence .ic {
        height: 22px;
    }
    .foot-mid {
        margin-left: 169px;
        padding-top: 36px;
        display: flex;
        align-items: flex-start;
        font-size: 32px;
        line-height: 38px;
        white-space: nowrap;
    }
    .foot-mid .ver {
        margin-right: 32px;
    }
    .heart {
        width: 34px;
        height: 30px;
        margin: 5px 12px 0 9px;
        fill: #f01a1a;
    }
    .foot-btns {
        margin-left: auto;
        margin-right: 293px;
        padding-top: 31px;
        display: flex;
        gap: 64px;
    }
    .fab {
        width: 64px;
        height: 64px;
        padding: 0;
        border: 0;
        border-radius: 50%;
        background: #1976d2;
        color: #f1f1f1;
        display: flex;
        align-items: center;
        justify-content: center;
        font-size: 44px;
        box-shadow: 0 5px 14px rgba(0, 0, 0, .4);
    }
    .fab .ic {
        height: 44px;
    }
    .fab.teal {
        background: #00735f;
    }
    .foot-scroll {
        width: 19px;
        flex: none;
        box-sizing: border-box;
        padding: 6px 0 4px;
        display: flex;
        flex-direction: column;
        justify-content: space-between;
        align-items: center;
        background: #f5f5f5;
    }
    .foot-scroll .up, .foot-scroll .down {
        border-left-width: 6px;
        border-right-width: 6px;
    }
    .foot-scroll .up {
        border-bottom-width: 10px;
    }
    .foot-scroll .down {
        border-top-width: 10px;
    }

    /* dialog */
    .backdrop {
        position: fixed;
        inset: 0;
        background: rgba(0, 0, 0, .325);
        z-index: 10;
    }
    .modal {
        position: fixed;
        left: 768px;
        top: 244px;
        width: 1201px;
        height: 1000px;
        background: #fff;
        border-radius: 6px 6px 0 0;
        z-index: 11;
        display: flex;
        flex-direction: column;
        font-family: Roboto, "Liberation Sans", sans-serif;
        font-size: 26.1px;
        box-shadow: 0 14px 70px rgba(0, 0, 0, .55);
    }
    .modal-head {
        height: 112px;
        flex: none;
        background: #aa5200;
        color: #fff;
        border-radius: 6px 6px 0 0;
        display: flex;
        justify-content: space-between;
        padding: 0 37px 0 48px;
        box-shadow: 0 3px 10px rgba(0, 0, 0, .25);
        position: relative;
    }
    h2 {
        margin: 49px 0 0;
        font-size: 33px;
        font-weight: 500;
        line-height: 34px;
    }
    .modal-actions {
        display: flex;
        align-items: flex-start;
        padding-top: 37px;
    }
    .help {
        font-size: 40px;
        line-height: 36px;
        margin-right: 55px;
    }
    .m-print {
        width: 32px;
        height: 32px;
        fill: #fff;
        margin-right: 43px;
        margin-top: 3px;
    }
    .m-code {
        width: 36px;
        height: 26px;
        fill: none;
        stroke: #fff;
        stroke-width: 2.600;
        margin-right: 48px;
        margin-top: 6px;
    }
    .m-close {
        width: 22px;
        height: 22px;
        fill: none;
        stroke: #fff;
        stroke-width: 3.400;
        margin-top: 8px;
    }
    .modal-body {
        flex: 1;
        min-height: 0;
        display: flex;
        overflow: hidden;
    }
    .form {
        flex: 1;
        min-width: 0;
        margin-left: 20px;
        padding-right: 20px;
    }
    .modal-scroll {
        width: 17px;
        flex: none;
        margin-right: 3px;
        padding: 6px 0;
        box-sizing: border-box;
        display: flex;
        flex-direction: column;
        align-items: center;
    }
    .modal-scroll .up {
        border-left-width: 5px;
        border-right-width: 5px;
        border-bottom: 10px solid #999;
    }
    .modal-scroll .down {
        border-left-width: 5px;
        border-right-width: 5px;
        border-top: 10px solid #999;
    }
    .modal-scroll .thumb {
        width: 12px;
        height: 508px;
        margin-top: 8px;
        border-radius: 6px;
        background: #8c8c8c;
    }
    .modal-scroll .fill {
        flex: 1;
    }
    .save-row {
        display: flex;
        justify-content: flex-end;
        padding: 30px 20px 0 0;
    }
    .save-btn {
        width: 112px;
        height: 53px;
        box-sizing: border-box;
        padding-left: 10px;
        background: #d6e7dc;
        color: #1a8a4a;
        display: flex;
        align-items: center;
        gap: 10px;
        font-size: 27.5px;
        box-shadow: 0 2px 3px rgba(0, 0, 0, .1);
    }
    .save-btn .ic {
        height: 26px;
    }
    .row {
        border-bottom: 2px solid #ddd;
        position: relative;
    }
    .lbl {
        color: #000;
    }
    .title-row {
        height: 132px;
        box-sizing: border-box;
        padding: 69px 0 0 32px;
        display: flex;
        line-height: 28px;
    }
    .title-val {
        margin-left: 418px;
        margin-top: -5px;
        white-space: nowrap;
    }
    .title-row .lbl {
        width: 0;
    }
    .desc-row {
        height: 251px;
        box-sizing: border-box;
        padding: 46px 0 0 32px;
        line-height: 28px;
    }
    .pick-row {
        display: flex;
        padding: 10px 10px 0 10px;
    }
    .pick-row.first {
        height: 127px;
        box-sizing: border-box;
        padding-top: 11px;
    }
    .pick {
        width: 550px;
        height: 91px;
        flex: none;
        box-sizing: border-box;
        border: 2px solid #ccc;
        padding-left: 20px;
        display: flex;
        align-items: center;
        white-space: pre;
        color: #7f7f7f;
        box-shadow: 0 4px 5px rgba(0, 0, 0, .2);
    }
    .pick.filled {
        background: #f9f9f9;
        box-shadow: none;
    }
    .picked {
        flex: 1;
        margin-left: 53px;
        height: 92px;
        box-sizing: border-box;
        display: flex;
        align-items: center;
        justify-content: space-between;
        padding-right: 39px;
    }
    .picked.underline {
        height: 94px;
        border-bottom: 2px solid #ddd;
    }
    .pick-icons {
        display: flex;
        align-items: center;
        gap: 13px;
    }
    .undo {
        width: 27px;
        height: 24px;
        fill: none;
        stroke: #777;
        stroke-width: 3;
    }
    .field {
        margin-left: 32px;
        height: 96px;
        box-sizing: border-box;
        padding-top: 7px;
        display: flex;
        align-items: flex-start;
    }
    .first-field {
        height: 102px;
        padding-top: 13px;
    }
    .field .lbl {
        width: 323px;
        flex: none;
        height: 79px;
        display: flex;
        align-items: center;
    }
    .sel {
        width: 754px;
        height: 79px;
        box-sizing: border-box;
        border: 2px solid #ddd;
        padding: 0 8px 0 28px;
        display: flex;
        align-items: center;
        justify-content: space-between;
        color: #666;
    }
    .sel.dark {
        border-color: #ccc;
        color: #222;
    }
    .sel-chev {
        color: #333;
    }

    /* chat bubble */
    .chat {
        position: fixed;
        left: 2569px;
        top: 1277px;
        width: 120px;
        height: 120px;
        border-radius: 50%;
        background: #04a84e;
        z-index: 12;
        display: flex;
        align-items: center;
        justify-content: center;
    }
    .chat svg {
        width: 56px;
        height: 62px;
        position: relative;
        top: 1px;
    }
    .chat b {
        position: absolute;
        top: 0;
        right: 0;
        width: 40px;
        height: 40px;
        border-radius: 50%;
        background: #b91010;
        color: #fff;
        font-family: Roboto, sans-serif;
        font-size: 22px;
        font-weight: 500;
        display: flex;
        align-items: center;
        justify-content: center;
    }
</style>
